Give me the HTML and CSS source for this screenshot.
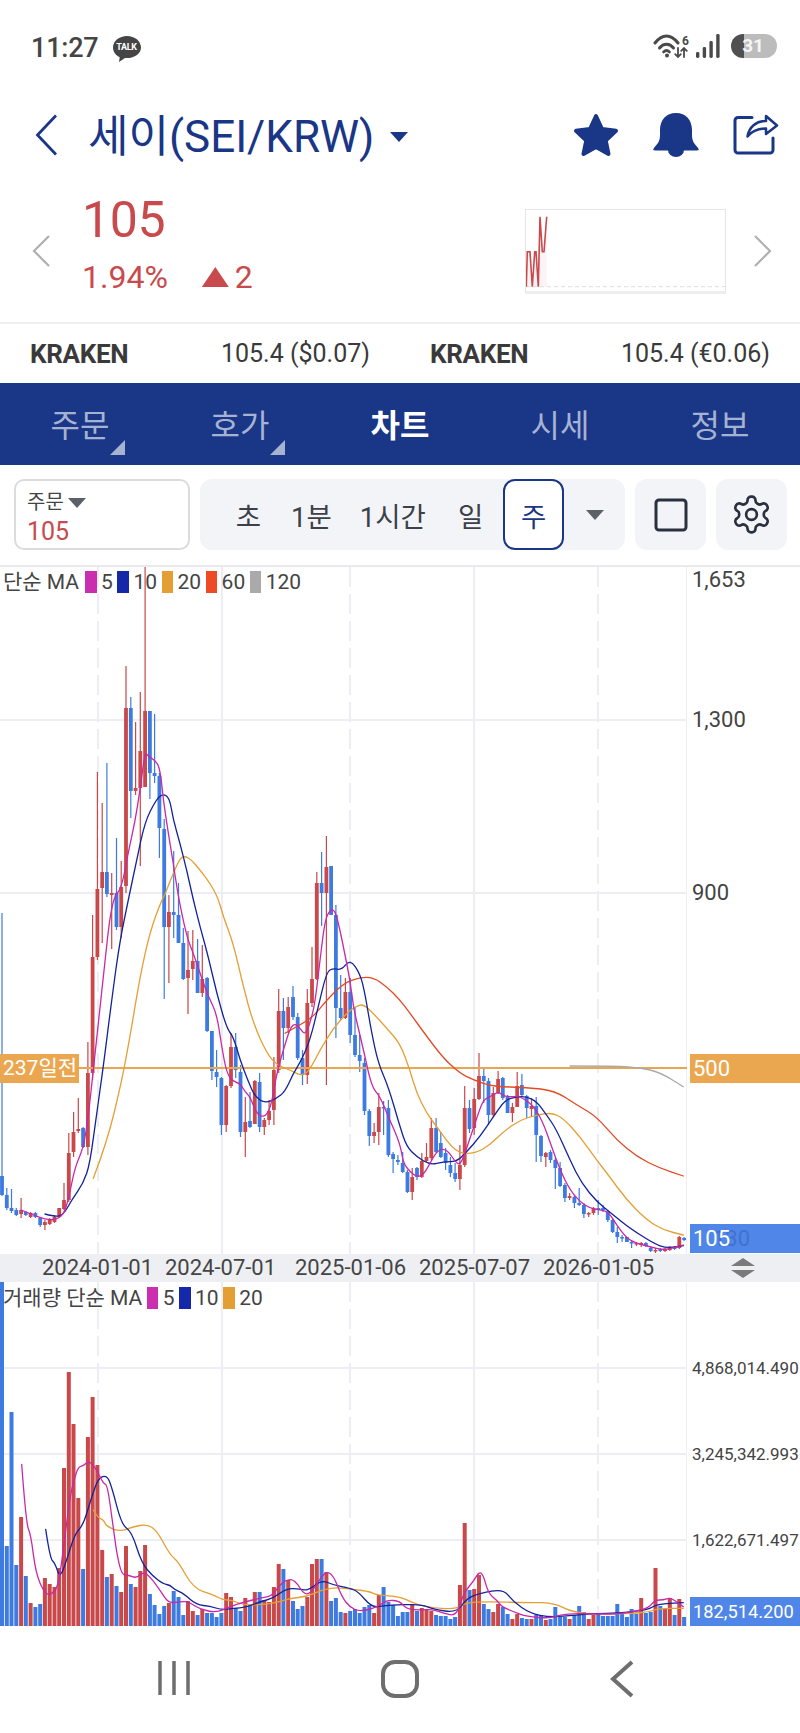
FILE: index.html
```html
<!DOCTYPE html>
<html lang="ko">
<head>
<meta charset="utf-8">
<title>세이(SEI/KRW) 차트</title>
<link rel="stylesheet" href="styles.css">
</head>
<body>
<div class="app">
  <div class="status">
    <div class="status-left">
      <span class="clock">11:27</span>
      <span class="kakao"><svg viewBox="0 0 28 26" width="28" height="26"><path class="fill-dark" d="M14 0C6.3 0 0 5 0 11.500c0 4.200 2.700 7.800 6.700 9.800L6 26l6-4c.7.100 1.300.100 2 .100 7.700 0 14-4.700 14-10.600C28 5 21.700 0 14 0z"/></svg><b>TALK</b></span>
    </div>
    <div class="status-right">
      <svg class="ic-wifi" viewBox="0 0 37 26" width="37" height="26" fill="none" stroke="#4a4a4a" stroke-width="3" stroke-linecap="round"><path d="M2 10C9 .5 18 .5 25 10"/><path d="M6.500 15c4-5 10-5 14 0"/><path stroke-width="2.600" d="M10.500 19c2-2 4-2 6 0"/><circle cx="14" cy="22.500" r="2" fill="#4a4a4a" stroke="none"/><path stroke-width="1.800" d="M25 15v9m-2.800-2.800L25 24l2.800-2.800M31 24v-9m-2.800 2.800L31 15l2.800 2.800"/><text x="29" y="12" class="wifi-six">6</text></svg>
      <svg class="ic-bars" viewBox="0 0 24 24" width="24" height="24" fill="#4a4a4a"><rect x="0" y="18" width="3.400" height="6" rx="1.400"/><rect x="6.700" y="13" width="3.400" height="11" rx="1.400"/><rect x="13.400" y="7" width="3.400" height="17" rx="1.400"/><rect x="20.200" y="0" width="3.400" height="24" rx="1.400"/></svg>
      <span class="battery">31</span>
    </div>
  </div>

  <header class="title-bar">
    <svg class="back" viewBox="0 0 22 42" width="22" height="42" fill="none" stroke="#1a3686" stroke-width="2.800"><path d="M21 1.500 2.500 21 21 40.500"/></svg>
    <h1 class="title">세이(SEI/KRW)</h1>
    <span class="title-caret"></span>
    <div class="title-actions">
      <svg viewBox="0 0 46 46" width="46" height="46"><path class="fill-navy stroke-navy" d="M23 4l6 13 14 1.800-10.300 9.700L35.500 42 23 35l-12.500 7 2.800-13.500L3 18.800 17 17z"/></svg>
      <svg viewBox="0 0 46 46" width="46" height="46"><path class="fill-navy" d="M23 1C13 1 7 8 7 18v5c0 7-3 9-6 13-1.500 2-.5 2.500 1 2.500h42c1.500 0 2.500-.5 1-2.500-3-4-6-6-6-13v-5C39 8 33 1 23 1z"/><path class="fill-navy" d="M15 38a8 7 0 0 0 16 0z"/></svg>
      <svg viewBox="0 0 46 44" width="46" height="44" fill="none" stroke="#1a3686" stroke-width="3" stroke-linecap="round" stroke-linejoin="round"><path d="M19 4.500H5a3 3 0 0 0-3 3V37a3 3 0 0 0 3 3H37a3 3 0 0 0 3-3V25"/><path stroke-width="2.500" d="M33 3l11 9.500L33 21v-5.500c-8 0-14 2.500-18.500 8C16 14 23 8 33 8z"/></svg>
    </div>
  </header>

  <section class="price-row">
    <svg class="side-arrow" viewBox="0 0 18 32" width="18" height="32" fill="none" stroke="#b0b0b0" stroke-width="2.200"><path d="M17 1 2 16l15 15"/></svg>
    <div class="price-col">
      <div class="price">105</div>
      <div class="change"><span>1.94%</span><span class="up-tri"></span><span>2</span></div>
    </div>
    <div class="mini">
      <svg viewBox="0 0 200 82" width="200" height="82">
        <path class="mini-area" d="M0 77 1.300 42H4L6.300 77 8.700 42H10L12.300 77 14 7l2.300 35H18L20.700 7V77z"/>
        <path class="mini-base" d="M0 76.700H200"/>
        <path class="mini-line" d="M.3 76.700 1.300 41.700H4L6.300 76.700 8.700 41.700H10L12.300 76.700 14 6.700l2.300 35H18L20.700 6.700"/>
      </svg>
    </div>
    <svg class="side-arrow" viewBox="0 0 18 32" width="18" height="32" fill="none" stroke="#b0b0b0" stroke-width="2.200"><path d="M1 1l15 15L1 31"/></svg>
  </section>

  <section class="exchanges">
    <div class="exchange"><b>KRAKEN</b><span>105.4 ($0.07)</span></div>
    <div class="exchange"><b>KRAKEN</b><span>105.4 (€0.06)</span></div>
  </section>

  <nav class="tabs">
    <a class="tab has-corner">주문</a>
    <a class="tab has-corner">호가</a>
    <a class="tab active">차트</a>
    <a class="tab">시세</a>
    <a class="tab">정보</a>
  </nav>

  <section class="toolbar">
    <div class="order-box">
      <div class="order-label">주문<span class="caret"></span></div>
      <div class="order-value">105</div>
    </div>
    <div class="periods">
      <span>초</span><span>1분</span><span class="p-hour">1시간</span><span class="p-day">일</span><span class="p-on">주</span><span class="caret caret-lg"></span>
    </div>
    <div class="tool-btn"><svg viewBox="0 0 34 34" width="34" height="34" fill="none" stroke="#2a3040" stroke-width="3"><rect x="2" y="2" width="30" height="30" rx="3"/></svg></div>
    <div class="tool-btn"><svg viewBox="0 0 24 24" width="43" height="43" fill="none" stroke="#2a3040" stroke-width="1.500" stroke-linejoin="round"><path d="M12.220 2h-.44a2 2 0 0 0-2 2v.18a2 2 0 0 1-1 1.730l-.43.25a2 2 0 0 1-2 0l-.15-.08a2 2 0 0 0-2.730.73l-.22.38a2 2 0 0 0 .73 2.730l.15.1a2 2 0 0 1 1 1.720v.51a2 2 0 0 1-1 1.740l-.15.09a2 2 0 0 0-.73 2.730l.22.38a2 2 0 0 0 2.730.73l.15-.08a2 2 0 0 1 2 0l.43.25a2 2 0 0 1 1 1.730V20a2 2 0 0 0 2 2h.44a2 2 0 0 0 2-2v-.18a2 2 0 0 1 1-1.730l.43-.25a2 2 0 0 1 2 0l.15.08a2 2 0 0 0 2.730-.73l.22-.39a2 2 0 0 0-.73-2.730l-.15-.08a2 2 0 0 1-1-1.740v-.5a2 2 0 0 1 1-1.740l.15-.09a2 2 0 0 0 .73-2.730l-.22-.38a2 2 0 0 0-2.730-.73l-.15.08a2 2 0 0 1-2 0l-.43-.25a2 2 0 0 1-1-1.730V4a2 2 0 0 0-2-2z"/><circle cx="12" cy="12" r="3"/></svg></div>
  </section>

  <section class="pane pane-price">
    <svg id="price-plot" class="plot" viewBox="0 567 687 687" width="687" height="687"></svg>
    <div class="legend">
      <span class="legend-name">단순 MA</span><i class="sw sw-5"></i><span>5</span><i class="sw sw-10"></i><span>10</span><i class="sw sw-20"></i><span>20</span><i class="sw sw-60"></i><span>60</span><i class="sw sw-120"></i><span>120</span>
    </div>
    <div class="ago">237일전</div>
    <span class="tick" style="top:0px">1,653</span>
    <span class="tick" style="top:140px">1,300</span>
    <span class="tick" style="top:313px">900</span>
    <div class="axis-tag tag-orange" style="top:487px">500</div>
    <div class="axis-tag tag-blue" style="top:657px"><span class="ghost">130</span><span class="tag-text">105</span></div>
  </section>

  <div class="xbar">
    <span class="xlabel" style="left:42px">2024-01-01</span>
    <span class="xlabel" style="left:165px">2024-07-01</span>
    <span class="xlabel" style="left:295px">2025-01-06</span>
    <span class="xlabel" style="left:419px">2025-07-07</span>
    <span class="xlabel" style="left:543px">2026-01-05</span>
    <svg class="resize" viewBox="0 0 24 20" width="24" height="20"><path class="fill-grey" d="M12 0l12 8H0zM0 12h24l-12 8z"/></svg>
  </div>

  <section class="pane pane-volume">
    <svg id="volume-plot" class="plot" viewBox="0 1282 687 345" width="687" height="345"></svg>
    <div class="legend">
      <span>거래량 단순 MA</span><i class="sw sw-5"></i><span>5</span><i class="sw sw-10"></i><span>10</span><i class="sw sw-20"></i><span>20</span>
    </div>
    <span class="tick tick-sm" style="top:75px">4,868,014.490</span>
    <span class="tick tick-sm" style="top:161px">3,245,342.993</span>
    <span class="tick tick-sm" style="top:247px">1,622,671.497</span>
    <div class="axis-tag tag-blue tag-sm" style="top:315px"><span class="tag-text">182,514.200</span></div>
  </section>

  <footer class="navbar">
    <svg viewBox="0 0 32 36" width="32" height="36" fill="none" stroke="#6e6e6e" stroke-width="3.500"><path d="M2 1v34M16 1v34M30 1v34"/></svg>
    <svg viewBox="0 0 38 38" width="38" height="38" fill="none" stroke="#6e6e6e" stroke-width="4"><rect x="2" y="2" width="34" height="34" rx="12"/></svg>
    <svg viewBox="0 0 24 38" width="24" height="38" fill="none" stroke="#6e6e6e" stroke-width="4"><path d="M22 2 3 19l19 17"/></svg>
  </footer>
</div>
<script src="chart.js"></script>
</body>
</html>
```

FILE: styles.css
```css
* { box-sizing: border-box; }
html, body { margin: 0; padding: 0; background: #fff; }
body { font-family: Roboto, "Noto Sans CJK KR", sans-serif; color: #3c3c3c; }
.app { width: 800px; height: 1733px; overflow: hidden; display: flex; flex-direction: column; }
.fill-dark { fill: #454545; }
.fill-navy { fill: #1a3686; }
.fill-grey { fill: #7a7a7a; }
.stroke-navy { stroke: #1a3686; stroke-width: 4; stroke-linejoin: round; }

.status { height: 90px; flex: none; display: flex; justify-content: space-between; align-items: flex-start; padding: 32px 23px 0 31px; }
.status-left { display: flex; align-items: center; gap: 14px; }
.clock { font-size: 27px; line-height: 32px; font-weight: 500; color: #454545; letter-spacing: -.2px; }
.kakao { position: relative; display: block; width: 28px; height: 26px; margin-top: 2px; }
.kakao svg { display: block; }
.kakao b { position: absolute; left: 0; right: 0; top: 6px; text-align: center; font-size: 9px; line-height: 11px; color: #fff; font-weight: 700; letter-spacing: -.3px; }
.status-right { display: flex; align-items: center; padding-top: 1px; }
.ic-wifi { display: block; margin-right: 6px; }
.ic-bars { display: block; margin-right: 11px; }
.wifi-six { font-size: 12px; font-weight: 700; fill: #4a4a4a; stroke: none; font-family: Roboto, sans-serif; }
.battery { width: 46px; height: 24px; border-radius: 12px; background: linear-gradient(90deg, #505050 0 28%, #bcbcbc 28% 100%); color: #f5f5f5; font-size: 19px; line-height: 24px; font-weight: 700; text-align: right; padding-right: 13px; }

.title-bar { height: 90px; flex: none; display: flex; align-items: center; padding: 0 21px 0 35px; }
.back { flex: none; }
.title { margin: 3px 0 0 31px; font-size: 44px; line-height: 60px; font-weight: 400; color: #1a3686; white-space: nowrap; }
.title-caret { width: 0; height: 0; margin: 3px 0 0 16px; border-left: 9.500px solid transparent; border-right: 9.500px solid transparent; border-top: 10px solid #1a3686; }
.title-actions { margin-left: auto; display: flex; align-items: center; gap: 34px; }

.price-row { height: 142px; flex: none; display: flex; align-items: center; padding: 0 28px 0 32px; }
.side-arrow { flex: none; }
.price-col { margin-left: 32px; align-self: flex-start; padding-top: 12px; color: #c94a4c; }
.price { font-size: 50px; line-height: 56px; letter-spacing: -.4px; }
.change { margin-top: 9px; display: flex; align-items: center; font-size: 32px; line-height: 40px; }
.up-tri { width: 27px; height: 20px; margin: 0 6px 0 34px; background: #c94a4c; clip-path: polygon(50% 0, 100% 100%, 0 100%); }
.mini { margin-left: auto; margin-right: 28px; width: 201px; height: 85px; border: 1px solid #e6e6e6; border-bottom: 3px solid #eeeeee; flex: none; }
.mini svg { display: block; }
.mini-area { fill: #fbf4f4; }
.mini-base { stroke: #dddddd; stroke-width: 1; stroke-dasharray: 4 3; fill: none; }
.mini-line { stroke: #c94a4c; stroke-width: 1.600; fill: none; }

.exchanges { height: 61px; flex: none; border-top: 2px solid #efefef; display: flex; gap: 60px; padding: 0 30px; align-items: center; }
.exchange { flex: 1; display: flex; justify-content: space-between; align-items: center; font-size: 25px; color: #3a3a3a; white-space: nowrap; }
.exchange b { font-weight: 700; font-size: 26px; letter-spacing: -.3px; }

.tabs { height: 82px; flex: none; background: #1a3686; display: flex; }
.tab { position: relative; flex: 1; display: flex; align-items: center; justify-content: center; font-size: 32px; color: #a6b2d2; padding-bottom: 2px; }
.tab.active { color: #fff; font-weight: 700; }
.has-corner::after { content: ""; position: absolute; right: 35px; bottom: 10px; width: 15px; height: 15px; background: #a6b2d2; clip-path: polygon(100% 0, 100% 100%, 0 100%); }

.toolbar { height: 100px; flex: none; display: flex; gap: 10px; padding: 14px 13px 15px 14px; }
.order-box { width: 176px; border: 2.500px solid #dcdcdc; border-radius: 10px; padding: 8px 11px 0; }
.order-label { display: flex; align-items: center; gap: 4px; font-size: 20px; line-height: 27px; color: #444; }
.caret { display: inline-block; width: 0; height: 0; border-left: 9px solid transparent; border-right: 9px solid transparent; border-top: 10px solid #5c6068; }
.order-value { font-size: 25px; line-height: 30px; color: #c94a4c; margin-top: 1px; }
.periods { width: 426px; background: #f3f4f7; border-radius: 12px; display: flex; align-items: center; gap: 30px; padding-left: 36px; font-size: 27.500px; color: #3c4048; }
.p-hour { margin-left: -2px; }
.p-day { margin-left: 2px; }
.p-on { width: 61px; height: 100%; margin-left: -10px; border: 2.500px solid #1a3686; border-radius: 12px; background: #fff; display: flex; align-items: center; justify-content: center; color: #1a3686; }
.caret-lg { margin-left: -8px; }
.tool-btn { width: 71px; background: #f3f4f7; border-radius: 12px; display: flex; align-items: center; justify-content: center; }

.pane { position: relative; flex: none; overflow: hidden; }
.pane-price { height: 689px; border-top: 2px solid #e9eaef; }
.pane-volume { height: 345px; }
.plot { display: block; }
.grid { stroke: #eceef4; stroke-width: 2; fill: none; }
.grid.dash { stroke-dasharray: 20 7; }
.up { fill: #c9484a; }
.down { fill: #3d7be0; }
.level { stroke: #e9a54f; stroke-width: 2; fill: none; }
.ma { fill: none; stroke-width: 1.300; stroke-linejoin: round; stroke-linecap: round; }
.ma5 { stroke: #c828a8; }
.ma10 { stroke: #14239a; }
.ma20 { stroke: #e3a035; }
.ma60 { stroke: #e34a24; }
.ma120 { stroke: #aaaaaa; }
.legend { position: absolute; left: 3px; top: 3px; display: flex; align-items: center; gap: 4.500px; font-size: 21px; line-height: 24px; color: #444; }
.legend-name { margin-right: 1.500px; }
.pane-volume .legend { top: 4px; }
.sw { width: 11.500px; height: 22px; display: block; }
.sw-5 { background: #cc2eb0; }
.sw-10 { background: #1428a8; }
.sw-20 { background: #e39f34; }
.sw-60 { background: #ee4a25; }
.sw-120 { background: #aaaaaa; }
.ago { position: absolute; left: 0; top: 487px; width: 79px; height: 29px; background: #eba74f; color: #fff; font-size: 21px; line-height: 29px; padding-left: 3px; white-space: nowrap; }
.tick { position: absolute; left: 692px; font-size: 22px; line-height: 26px; color: #444; white-space: nowrap; }
.tick-sm { font-size: 17px; line-height: 22px; }
.axis-tag { position: absolute; left: 690px; width: 110px; height: 29px; color: #fff; font-size: 22px; line-height: 29px; padding-left: 3px; overflow: hidden; }
.tag-orange { background: #eba74f; }
.tag-blue { background: #4f86e8; }
.tag-sm { font-size: 18.300px; height: 29px; }
.ghost { position: absolute; left: 23px; top: 0; color: #3f72cf; }
.tag-text { position: relative; }

.xbar { position: relative; height: 28px; flex: none; background: #eeeff3; }
.xlabel { position: absolute; top: 1px; font-size: 22px; line-height: 26px; color: #444; white-space: nowrap; }
.resize { position: absolute; left: 731px; top: 4px; }

.navbar { height: 106px; flex: none; display: flex; align-items: flex-start; justify-content: space-between; padding: 33px 166px 0 158px; }
```

FILE: chart.js
```js
// Weekly SEI/KRW chart, coordinates are page pixels read off the trading view.
// Candles: [isUp, bodyTop, bodyBottom, wickTop, wickBottom]
const CANDLES = [
[0,1176,1195,913,1196],[0,1195,1208,1188,1210],[0,1208,1211,1189,1213],[0,1210,1215,1208,1216],
[1,1210,1214,1198,1218],[0,1212,1215,1211,1216],[1,1213,1217,1212,1218],[0,1213,1217,1212,1218],
[0,1218,1225,1217,1227],[1,1222,1225,1220,1230],[1,1219,1224,1218,1225],[1,1217,1222,1215,1223],
[1,1208,1217,1208,1218],[1,1200,1209,1183,1210],[1,1153,1200,1133,1202],[1,1132,1152,1112,1157],
[1,1129,1131,1098,1133],[0,1128,1147,1127,1148],[1,1073,1147,1042,1155],[1,957,1073,915,1080],
[1,889,957,772,960],[1,872,888,803,943],[0,872,894,763,897],[1,893,895,873,949],
[0,893,927,838,930],[1,887,927,861,938],[1,708,886,666,893],[0,708,791,697,818],
[1,788,791,722,795],[1,751,788,692,866],[1,711,787,566,787],[0,711,773,711,799],
[0,773,776,714,783],[0,776,828,773,858],[0,829,927,819,999],[1,912,927,895,983],
[0,912,915,851,938],[0,915,943,883,943],[0,943,979,928,980],[1,970,978,931,1014],
[1,961,969,930,980],[0,961,993,939,993],[1,979,993,945,997],[0,978,1031,977,1032],
[0,1031,1071,1031,1080],[0,1072,1077,1050,1087],[0,1078,1125,1077,1135],[1,1086,1125,1085,1132],
[1,1047,1086,1033,1088],[0,1047,1070,1033,1078],[0,1072,1132,1065,1137],[1,1122,1132,1097,1157],
[0,1121,1127,1092,1128],[1,1081,1124,1080,1124],[0,1082,1127,1073,1132],[1,1120,1127,1118,1135],
[1,1111,1120,1100,1125],[1,1070,1110,1057,1125],[1,1011,1070,989,1073],[0,1011,1028,998,1060],
[1,1007,1028,997,1033],[0,997,1017,986,1020],[0,1017,1058,1013,1060],[0,1058,1075,1050,1085],
[1,1003,1075,989,1084],[1,979,1003,947,1007],[1,883,979,872,980],[0,883,893,852,926],
[1,867,893,836,1085],[0,866,915,866,915],[0,915,1008,905,1038],[0,1008,1018,975,1020],
[1,992,1018,978,1019],[0,992,1035,978,1043],[0,1035,1055,1007,1057],[0,1055,1061,1035,1072],
[0,1063,1111,1058,1115],[0,1111,1136,1109,1146],[1,1132,1136,1123,1143],[1,1107,1132,1093,1145],
[0,1107,1108,1101,1135],[0,1108,1155,1100,1157],[0,1154,1159,1152,1173],[0,1160,1162,1155,1165],
[0,1163,1172,1152,1173],[0,1172,1192,1170,1193],[1,1177,1192,1168,1200],[0,1168,1177,1167,1180],
[1,1161,1177,1153,1178],[1,1157,1161,1143,1162],[1,1128,1158,1118,1160],[0,1128,1152,1118,1153],
[0,1143,1157,1132,1158],[0,1153,1163,1148,1170],[0,1165,1173,1157,1177],[0,1173,1179,1163,1182],
[1,1165,1179,1145,1190],[1,1108,1165,1086,1167],[0,1108,1129,1100,1133],[1,1099,1128,1088,1135],
[1,1076,1099,1053,1100],[0,1076,1081,1069,1103],[0,1081,1115,1078,1125],[1,1093,1115,1087,1117],
[1,1079,1093,1071,1094],[0,1078,1098,1077,1100],[0,1097,1113,1095,1113],[1,1107,1113,1103,1122],
[1,1086,1107,1072,1107],[0,1085,1095,1074,1097],[0,1096,1108,1095,1118],[1,1106,1109,1098,1117],
[0,1106,1135,1097,1162],[0,1136,1156,1135,1162],[1,1153,1157,1152,1167],[0,1152,1160,1150,1163],
[0,1160,1168,1158,1189],[0,1168,1186,1162,1187],[0,1185,1198,1183,1202],[1,1196,1198,1193,1200],
[0,1197,1203,1195,1208],[0,1203,1205,1188,1206],[0,1205,1214,1203,1218],[1,1213,1214,1212,1217],
[1,1208,1213,1207,1215],[0,1208,1210,1200,1215],[0,1208,1210,1205,1212],[0,1212,1220,1210,1222],
[0,1220,1232,1218,1233],[0,1232,1237,1227,1243],[0,1237,1238,1235,1242],[0,1237,1242,1237,1242],
[0,1242,1243,1240,1248],[1,1243,1244,1242,1246],[1,1243,1245,1242,1247],[0,1243,1246,1242,1247],
[0,1248,1251,1247,1252],[1,1250,1251,1248,1253],[0,1249,1251,1248,1252],[1,1249,1251,1248,1252],
[1,1247,1250,1246,1251],[0,1247,1249,1246,1250],[1,1237,1248,1236,1249],[0,1238,1240,1237,1241]
];

// Volume bar tops: signed page y, positive = up candle (red), negative = down (blue)
const VOLUME = [
-1282,-1546,-1412,-1565,1517,-1576,1603,-1607,-1604,1578,1584,1587,1568,1468,1372,1424,
1498,-1569,1437,1397,1465,1550,-1577,1574,-1586,1592,1546,-1584,1587,1571,1545,-1594,
-1605,-1614,-1606,1603,-1591,-1597,-1615,1601,1611,-1615,1609,-1613,-1613,-1617,-1613,1593,
1597,-1608,-1611,1598,-1604,1592,-1592,1600,1602,1587,1564,-1569,1580,-1601,-1609,-1606,
1597,1564,1559,-1559,1572,-1601,-1598,-1612,1613,-1611,-1609,-1613,-1607,-1605,1613,1595,
-1587,-1602,-1605,-1616,-1612,-1612,1604,-1611,1608,1610,1611,-1615,-1616,-1616,-1619,-1617,
1585,1523,-1590,1589,1575,-1604,-1609,1612,1604,-1607,-1614,1619,1614,-1618,-1619,1619,
-1615,-1615,1620,-1619,-1607,-1617,-1617,1619,-1615,-1606,-1612,1619,1615,-1614,-1616,-1616,
-1616,-1604,-1614,-1617,-1609,-1614,1598,-1613,-1612,1568,-1606,1609,1598,-1615,1599,-1617
];

// Moving-average traces: sections of [xOrigin, yOrigin, [x, y, ...]] sampled at 3x.
const A = 0, B = 560, C = 900, R = 400, V = 1270;
const MA_PRICE = [
 { cls: "ma120", parts: [[R, C, [510,498,650,498,720,503,780,517,850,560]]] },
 { cls: "ma60", parts: [
  [A, C, [855,400,900,375,940,350,980,300,1030,250,1080,232,1120,232,1160,260,1200,300]],
  [R, C, [30,340,70,395,130,475,180,520,220,540,280,560,380,562,465,572,530,615,590,650,650,720,710,770,780,805,850,828]]] },
 { cls: "ma20", parts: [
  [A, C, [280,835,320,730,365,545,390,410,420,230,450,95,485,0]],
  [A, B, [490,1015,520,940,540,895,555,888,575,900,600,930,630,970,655,1015]],
  [A, C, [670,50,700,130,730,260,760,370,800,460,830,495,870,510,910,530,935,500,960,450,1000,385,1040,340,1065,320,1090,312,1120,340,1160,385,1200,430]],
  [R, C, [30,510,50,580,80,640,110,680,150,735,180,760,225,760,270,735,310,695,360,660,410,645,455,638,490,655,540,710,590,780,625,825,680,900,740,960,790,990,850,1005]]] },
 { cls: "ma10", parts: [
  [A, C, [135,942,165,950,190,945,215,900,250,850,270,790,290,640,310,500,335,300,360,120,385,0]],
  [A, B, [385,1020,410,900,435,785,465,725,485,702,508,710,520,780,540,850,560,930,580,1020]],
  [A, C, [600,80,625,170,650,280,680,385,700,410,720,480,745,545,765,590,795,610,830,595,855,575,880,520,905,480,930,420,955,320,980,215,1000,205,1025,210,1050,178,1080,220,1095,280,1115,400,1135,490,1165,560,1200,680]],
  [R, C, [20,740,50,770,90,795,130,785,170,785,200,755,240,710,280,650,315,600,350,590,380,590,410,605,440,645,470,690,510,780,545,850,590,905,640,945,690,985,760,1030,800,1045,850,1037]]] },
 { cls: "ma5", parts: [
  [A, C, [64,930,100,945,135,958,165,960,190,945,205,900,225,800,250,745,265,650,285,460,310,230,335,0]],
  [A, B, [365,985,385,875,405,785,420,690,435,575,445,590,465,600,480,625,490,720,505,820,520,910,535,1010]],
  [A, C, [560,110,580,160,600,220,625,290,650,340,665,440,680,520,700,545,720,550,735,575,750,590,770,640,785,650,800,645,815,610,830,520,850,450,870,385,885,370,900,385,915,405,930,370,945,310,960,180,975,60,990,30,1005,30,1020,90,1035,165,1050,240,1060,320,1075,385,1095,470,1115,560,1140,590,1165,650,1200,730]],
  [R, C, [10,790,30,815,50,830,70,825,90,790,110,755,130,745,150,760,165,785,180,795,195,760,215,700,235,640,250,600,270,590,295,575,315,590,340,590,360,590,385,605,405,625,430,670,455,740,480,810,510,870,540,905,570,925,600,930,625,935,650,975,680,1015,710,1030,750,1040,790,1050,825,1042,850,1035]]] }
];
const MA_VOLUME = [
 { cls: "ma20", parts: [
  [A, V, [280,720,295,745,310,748,320,770,360,785,400,770,440,763,470,780,510,855,535,875,580,955,640,975,670,990,695,990,730,1005,810,1003,870,985,920,980,965,960,1010,952,1060,958,1110,965,1130,975,1200,980]],
  [R, V, [30,995,80,1012,170,1018,195,998,260,995,380,998,460,998,520,1028,600,1032,700,1030,750,1025,775,1015,850,1015]]] },
 { cls: "ma10", parts: [
  [A, V, [137,778,150,865,165,880,180,925,200,870,225,790,250,765,275,680,295,625,320,615,335,650,365,765,395,785,425,880,460,920,490,942,510,945,525,960,550,970,590,1005,630,1008,665,1020,700,1015,740,1012,780,995,820,985,860,955,900,957,925,962,965,930,1000,945,1050,955,1075,965,1115,1012,1150,1008,1200,1003]],
  [R, V, [70,1005,100,1018,170,1028,200,985,240,970,310,957,340,995,390,1030,450,1042,530,1035,590,1030,650,1030,745,1020,770,1002,850,998]]] },
 { cls: "ma5", parts: [
  [A, V, [65,583,78,760,93,795,107,910,135,973,155,973,175,950,195,800,210,680,222,630,235,590,250,588,265,573,280,585,295,610,310,640,322,645,337,750,350,850,365,915,385,915,410,925,430,905,450,920,480,960,505,1000,540,995,565,995,600,1018,650,1028,690,1010,735,995,780,985,815,978,835,950,860,928,885,930,915,978,940,960,975,903,1000,915,1025,980,1050,1012,1080,1025,1130,1012,1160,990,1200,993]],
  [R, V, [20,1018,60,1020,100,1018,130,1030,170,1038,190,970,220,935,237,905,250,915,265,970,290,990,305,1010,340,1025,380,1040,450,1045,480,1035,530,1030,570,1032,650,1032,700,1025,745,1015,765,990,790,990,810,983,830,995,850,1010]]] }
];

const STEP = 4.77, X0 = 2;
const f = n => +n.toFixed(1);

function tracePath(parts) {
  const pts = [];
  parts.forEach(([ox, oy, raw]) => {
    for (let i = 0; i < raw.length; i += 2) pts.push([ox + raw[i] / 3, oy + raw[i + 1] / 3]);
  });
  let d = `M${f(pts[0][0])} ${f(pts[0][1])}`;
  for (let i = 1; i < pts.length - 1; i++) {
    const mx = (pts[i][0] + pts[i + 1][0]) / 2, my = (pts[i][1] + pts[i + 1][1]) / 2;
    d += `Q${f(pts[i][0])} ${f(pts[i][1])} ${f(mx)} ${f(my)}`;
  }
  const last = pts[pts.length - 1];
  return d + `L${f(last[0])} ${f(last[1])}`;
}

function grid(top, bottom, rows) {
  let s = "";
  rows.forEach(y => { s += `<path class="grid" d="M0 ${y}H687"/>`; });
  [222, 474, 687].forEach(x => { s += `<path class="grid" d="M${x} ${top}V${bottom}"/>`; });
  [98, 350, 598].forEach(x => { s += `<path class="grid dash" d="M${x} ${top}V${bottom}"/>`; });
  return s;
}

function traces(list) {
  return list.map(m => `<path class="ma ${m.cls}" d="${tracePath(m.parts)}"/>`).join("");
}

function drawPrice() {
  let s = grid(567, 1254, [720, 893]);
  CANDLES.forEach((c, i) => {
    const cx = X0 + STEP * i, col = c[0] ? "up" : "down";
    s += `<rect class="${col}" x="${f(cx - .6)}" y="${c[3]}" width="1.2" height="${c[4] - c[3]}"/>`;
    s += `<rect class="${col}" x="${f(cx - 1.9)}" y="${c[1]}" width="3.8" height="${Math.max(c[2] - c[1], 1.5)}"/>`;
  });
  s += `<path class="level" d="M0 1068H687"/>`;
  s += traces(MA_PRICE);
  document.getElementById("price-plot").innerHTML = s;
}

function drawVolume() {
  let s = grid(1282, 1627, [1368, 1454, 1540]);
  VOLUME.forEach((v, i) => {
    const top = Math.abs(v), cx = X0 + STEP * i;
    s += `<rect class="${v > 0 ? "up" : "down"}" x="${f(cx - 2)}" y="${top}" width="4" height="${1626 - top}"/>`;
  });
  s += traces(MA_VOLUME);
  document.getElementById("volume-plot").innerHTML = s;
}

drawPrice();
drawVolume();
```
